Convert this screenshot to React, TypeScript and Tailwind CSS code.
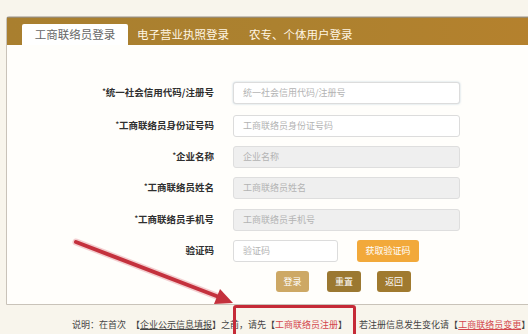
import React from "react";

const font = { fontFamily: '"Noto Sans CJK SC", "Noto Sans", sans-serif' };

function Row({
  label,
  placeholder,
  gray,
  focused,
  mt,
}: {
  label: string;
  placeholder: string;
  gray?: boolean;
  focused?: boolean;
  mt: string;
}) {
  return (
    <div className={`flex items-center ${mt}`}>
      <div className="w-[207px] text-right text-[9.5px] font-bold text-[#2f2f2f] leading-none">
        <span className="text-[7px] align-top">*</span>
        {label}
      </div>
      <div
        className={`ml-[19px] w-[227px] h-[22px] rounded-[3px] border flex items-center pl-[9px] text-[9px] text-[#b3b3b3] ${
          gray ? "bg-[#efefef] border-[#dedede]" : "bg-white border-[#dcdcdc]"
        } ${focused ? "border-[#a6bccb] shadow-[0_0_2px_rgba(120,160,190,0.5)]" : ""}`}
      >
        {placeholder}
      </div>
    </div>
  );
}

export default function App() {
  return (
    <div
      className="relative w-[528px] h-[334px] overflow-hidden bg-[#f8f5ec]"
      style={font}
    >
      <div className="pt-[16px] pl-[6px]">
        {/* panel */}
        <div className="w-[540px] h-[289px] rounded-tl-[3px] border border-[#c9c3b9] bg-[#fffefb]">
          {/* header */}
          <div className="h-[28px] bg-gradient-to-r from-[#a97f2f] via-[#ac812f] to-[#b5812d] border-t border-[#9b8a6a] flex items-end pl-[15px]">
            <div className="w-[106px] h-[21px] bg-white rounded-t-[2px] flex items-center justify-center text-[11.5px] text-[#666] leading-none">
              工商联络员登录
            </div>
            <div className="ml-[9px] h-[21px] flex items-center text-[11.5px] text-[#fff6e4] leading-none">
              电子营业执照登录
            </div>
            <div className="ml-[20px] h-[21px] flex items-center text-[11.5px] text-[#fff6e4] leading-none">
              农专、个体用户登录
            </div>
          </div>

          {/* form */}
          <div className="pt-[37px]">
            <Row
              label="统一社会信用代码/注册号"
              placeholder="统一社会信用代码/注册号"
              focused
              mt="mt-0"
            />
            <Row
              label="工商联络员身份证号码"
              placeholder="工商联络员身份证号码"
              mt="mt-[11px]"
            />
            <Row label="企业名称" placeholder="企业名称" gray mt="mt-[9px]" />
            <Row
              label="工商联络员姓名"
              placeholder="工商联络员姓名"
              gray
              mt="mt-[9px]"
            />
            <Row
              label="工商联络员手机号"
              placeholder="工商联络员手机号"
              gray
              mt="mt-[10px]"
            />
            <div className="flex items-center mt-[9px]">
              <div className="w-[207px] text-right text-[9.5px] font-bold text-[#2f2f2f] leading-none">
                验证码
              </div>
              <div className="ml-[19px] w-[105px] h-[22px] rounded-[3px] border border-[#dcdcdc] bg-white flex items-center pl-[9px] text-[9px] text-[#b3b3b3]">
                验证码
              </div>
              <div className="ml-[19px] w-[62px] h-[22px] rounded-[3px] bg-[#f2a93a] flex items-center justify-center text-[9px] text-white">
                获取验证码
              </div>
            </div>
            <div className="flex items-center mt-[9px] pl-[269px]">
              <div className="w-[33px] h-[21px] rounded-[3px] bg-[#cda865] flex items-center justify-center text-[9px] text-white">
                登录
              </div>
              <div className="ml-[18px] w-[34px] h-[21px] rounded-[3px] bg-[#9b7831] flex items-center justify-center text-[9px] text-white">
                重置
              </div>
              <div className="ml-[16px] w-[34px] h-[21px] rounded-[3px] bg-[#a07a2f] flex items-center justify-center text-[9px] text-white">
                返回
              </div>
            </div>
          </div>
        </div>
      </div>

      {/* note */}
      <div className="pl-[72px] pt-[15px] text-[9px] text-[#444] leading-none whitespace-nowrap">
        说明：在首次 <span className="ml-[3px]">【</span>
        <span className="underline">企业公示信息填报</span>】之前，请先【
        <span className="text-[#d4474d]">工商联络员注册</span>】
        <span className="ml-[12px]">若注册信息发生变化请【</span>
        <span className="text-[#d4474d] underline">工商联络员变更</span>】
      </div>

      {/* annotation overlays */}
      <div className="absolute left-[233px] top-[305px] w-[123px] h-[40px] border-[3px] border-[#c52a37] rounded-[3px]" />
      <svg
        className="absolute left-0 top-0"
        width="528"
        height="334"
        viewBox="0 0 528 334"
      >
        <line
          x1="76"
          y1="242"
          x2="219"
          y2="297"
          stroke="#e9a0a6"
          strokeWidth="7"
          strokeLinecap="round"
          opacity="0.5"
        />
        <line
          x1="76"
          y1="242"
          x2="219"
          y2="297"
          stroke="#c4313d"
          strokeWidth="4"
          strokeLinecap="round"
        />
        <polygon points="233,303 214,304 220,289" fill="#c4313d" />
      </svg>
    </div>
  );
}
